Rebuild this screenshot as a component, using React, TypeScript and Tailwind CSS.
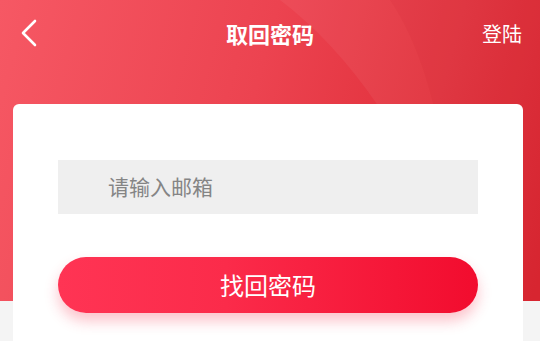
import React from "react";

export default function App() {
  return (
    <div
      className="w-[540px] h-[341px] overflow-hidden bg-[#f4f4f4]"
      style={{ fontFamily: '"Noto Sans CJK SC", "Noto Sans", sans-serif' }}
    >
      <div className="relative h-[301px] bg-[linear-gradient(105deg,#f65864_0%,#ec4350_45%,#e1303b_75%,#d81c27_100%)] overflow-hidden">
        <svg
          className="absolute inset-0 pointer-events-none"
          width="540"
          height="301"
          viewBox="0 0 540 301"
        >
          <path d="M280 0 C 360 60, 430 170, 470 301 L 540 301 L 540 0 Z" fill="#ffffff" opacity="0.05" />
          <path d="M390 0 C 430 60, 450 150, 460 301 L 540 301 L 540 0 Z" fill="#b00010" opacity="0.05" />
        </svg>
        <div className="relative flex items-center justify-between h-[66px] pl-[20px] pr-[18px]">
          <svg width="18" height="30" viewBox="0 0 18 30" fill="none">
            <path d="M15 3 L3 15 L15 27" stroke="#ffffff" strokeWidth="2.6" strokeLinecap="round" strokeLinejoin="round" />
          </svg>
          <div className="absolute left-0 right-0 text-center text-white font-bold text-[22px] leading-none pointer-events-none">
            取回密码
          </div>
          <div className="text-white text-[20px] leading-none mt-[2px]">登陆</div>
        </div>
      </div>
      <div className="relative ml-[13px] w-[510px] -mt-[197px] h-[260px] bg-white rounded-[6px] pt-[56px] px-[45px]">
        <div className="h-[54px] bg-[#efefef] flex items-center pl-[50px] text-[21px] text-[#858585]">
          请输入邮箱
        </div>
        <button className="mt-[43px] w-full h-[56px] rounded-full bg-[linear-gradient(90deg,#ff3454_0%,#fb2b4a_40%,#f20c2e_100%)] text-white text-[24px] flex items-center justify-center shadow-[0_8px_14px_rgba(245,40,70,0.28)]">
          找回密码
        </button>
      </div>
    </div>
  );
}
